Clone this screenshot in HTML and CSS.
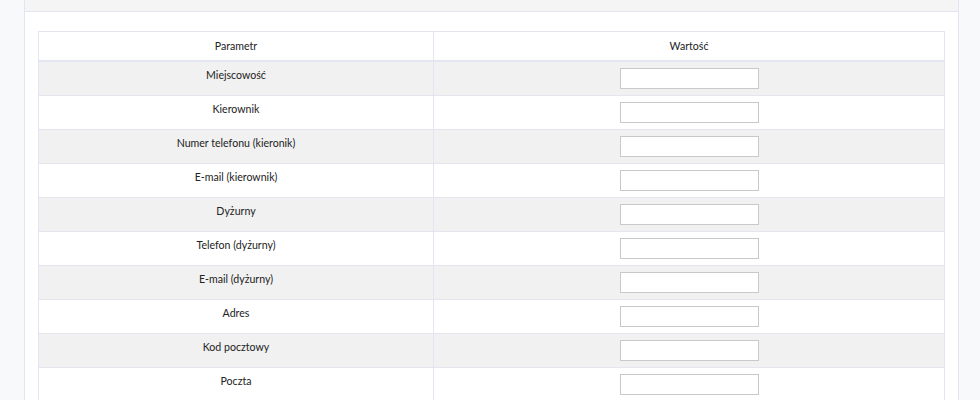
FILE: index.html
```html
<!DOCTYPE html>
<html lang="pl">
<head>
    <meta charset="UTF-8">
    <meta name="viewport" content="width=device-width, initial-scale=1.0">
    <title>Ustawienia jednostki</title>
    <link rel="stylesheet" href="styles.css">
</head>
<body>
    <div class="wrapper">
        <div class="card">
            <div class="card-header">Dane jednostki</div>
            <div class="card-body">
                <table class="params">
                    <thead>
                        <tr>
                            <th class="col-name">Parametr</th>
                            <th>Wartość</th>
                        </tr>
                    </thead>
                    <tbody>
                        <tr>
                            <td>Miejscowość</td>
                            <td><input type="text" name="miejscowosc"></td>
                        </tr>
                        <tr>
                            <td>Kierownik</td>
                            <td><input type="text" name="kierownik"></td>
                        </tr>
                        <tr>
                            <td>Numer telefonu (kieronik)</td>
                            <td><input type="text" name="tel_kierownik"></td>
                        </tr>
                        <tr>
                            <td>E-mail (kierownik)</td>
                            <td><input type="text" name="email_kierownik"></td>
                        </tr>
                        <tr>
                            <td>Dyżurny</td>
                            <td><input type="text" name="dyzurny"></td>
                        </tr>
                        <tr>
                            <td>Telefon (dyżurny)</td>
                            <td><input type="text" name="tel_dyzurny"></td>
                        </tr>
                        <tr>
                            <td>E-mail (dyżurny)</td>
                            <td><input type="text" name="email_dyzurny"></td>
                        </tr>
                        <tr>
                            <td>Adres</td>
                            <td><input type="text" name="adres"></td>
                        </tr>
                        <tr>
                            <td>Kod pocztowy</td>
                            <td><input type="text" name="kod"></td>
                        </tr>
                        <tr>
                            <td>Poczta</td>
                            <td><input type="text" name="poczta"></td>
                        </tr>
                    </tbody>
                </table>
            </div>
        </div>
    </div>
</body>
</html>
```

FILE: styles.css
```css
body {
    margin: 0;
    padding: 0;
    font-family: Lato, "Open Sans", sans-serif;
    font-size: 10.6px;
    color: #222;
    background-color: #f8f9fa;
}

.wrapper {
    padding: 0 21px 0 24px;
}

.card {
    margin-top: -27px;
    background-color: #fff;
    border: 1px solid #e3e6f0;
    border-top: none;
}

.card-header {
    height: 39px;
    line-height: 30px;
    padding: 0 12px;
    font-size: 11px;
    font-weight: bold;
    color: #6e707e;
    background-color: #f5f5f5;
    border-bottom: 1px solid #e3e6f0;
    box-sizing: border-box;
}

.card-body {
    padding: 19px 13px 20px;
}

.params {
    width: 100%;
    border-collapse: collapse;
    border: 1px solid #e3e6f0;
}

.params th,
.params td {
    text-align: center;
    vertical-align: middle;
    border-left: 1px solid #e3e6f0;
    border-top: 1px solid #e3e6f0;
}

.params th {
    font-weight: normal;
    height: 28px;
    padding: 0 8px;
    border-bottom: 2px solid #e3e6f0;
}

.params td {
    height: 21px;
    padding: 6px 8px;
}

.params td:first-child {
    vertical-align: top;
    line-height: 14px;
}

.col-name {
    width: 378px;
}

.params tbody tr:nth-child(odd) {
    background-color: #f1f1f1;
}

.params input {
    display: block;
    margin: 0 auto;
    width: 139px;
    height: 21px;
    box-sizing: border-box;
    border: 1px solid #c9c9c9;
    background-color: #fff;
    padding: 1px 4px;
    font-family: inherit;
    font-size: 10px;
}
```
